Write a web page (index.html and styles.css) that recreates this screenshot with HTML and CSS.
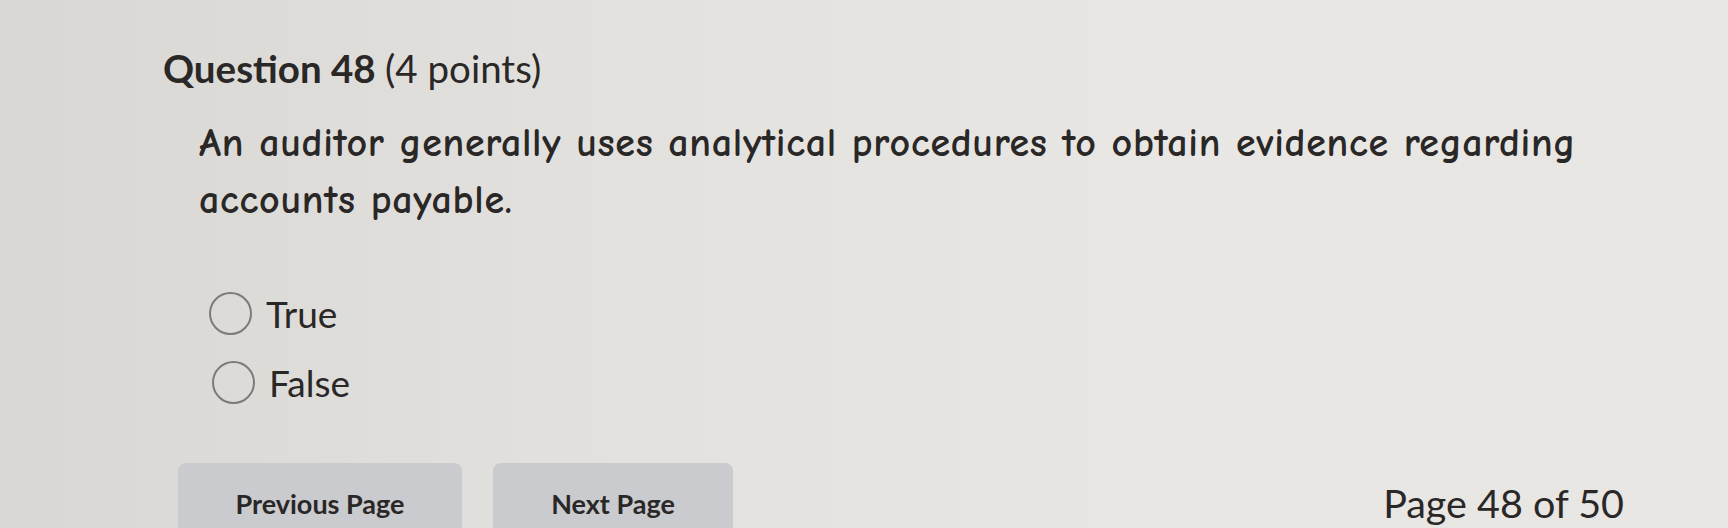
FILE: index.html
```html
<!DOCTYPE html>
<html lang="en">
<head>
    <meta charset="UTF-8">
    <meta name="viewport" content="width=device-width, initial-scale=1.0">
    <title>Question 48</title>
    <link rel="stylesheet" href="styles.css">
</head>
<body>
    <div class="quiz">
        <h1 class="q-title">Question 48 <span class="pts">(4 points)</span></h1>

        <p class="q-text">An auditor generally uses analytical procedures to obtain evidence regarding accounts payable.</p>

        <div class="choices">
            <label class="choice"><span class="radio"></span>True</label>
            <label class="choice choice-2"><span class="radio"></span>False</label>
        </div>

        <div class="pager">
            <button class="btn btn-prev">Previous Page</button>
            <button class="btn btn-next">Next Page</button>
            <span class="page-count">Page 48 of 50</span>
        </div>
    </div>
</body>
</html>
```

FILE: styles.css
```css
body {
    margin: 0;
    height: 528px;
    overflow: hidden;
    background: linear-gradient(90deg, #d9d7d4 0%, #e3e1de 35%, #e9e7e4 70%, #e8e6e3 100%);
    font-family: Lato, "Open Sans", sans-serif;
    color: #2a2727;
}
.quiz {
    padding: 45px 104px 0 163px;
}
.q-title {
    margin: 0;
    font-size: 38.5px;
    font-weight: 700;
    line-height: 1.2;
}
.q-title .pts {
    font-weight: 400;
}
.q-text {
    margin: 24px 0 0 36px;
    max-width: 1440px;
    font-family: "Comic Sans MS", "Comic Neue", "DejaVu Sans", sans-serif;
    font-size: 40px;
    font-weight: 700;
    letter-spacing: 0.7px;
    line-height: 57px;
}
.choices {
    margin: 62px 0 0 46px;
    display: flex;
    flex-direction: column;
    gap: 24px;
}
.choice {
    display: flex;
    align-items: center;
    gap: 14px;
    font-size: 37px;
    line-height: 45px;
}
.choice-2 {
    margin-left: 3px;
}
.radio {
    width: 43px;
    height: 43px;
    border: 2px solid #7c7b7a;
    border-radius: 50%;
    box-sizing: border-box;
}
.pager {
    margin-top: 58px;
    margin-left: 15px;
    display: flex;
    align-items: flex-start;
}
.btn {
    height: 80px;
    padding: 0;
    border: none;
    border-radius: 8px;
    background: #c9cbce;
    font-family: Lato, "Open Sans", sans-serif;
    font-size: 27px;
    font-weight: 700;
    color: #2a2727;
    text-align: center;
    cursor: pointer;
}
.btn-prev {
    width: 284px;
}
.btn-next {
    width: 240px;
    margin-left: 31px;
}
.page-count {
    margin-left: auto;
    padding-top: 16px;
    font-size: 39.5px;
}
```
